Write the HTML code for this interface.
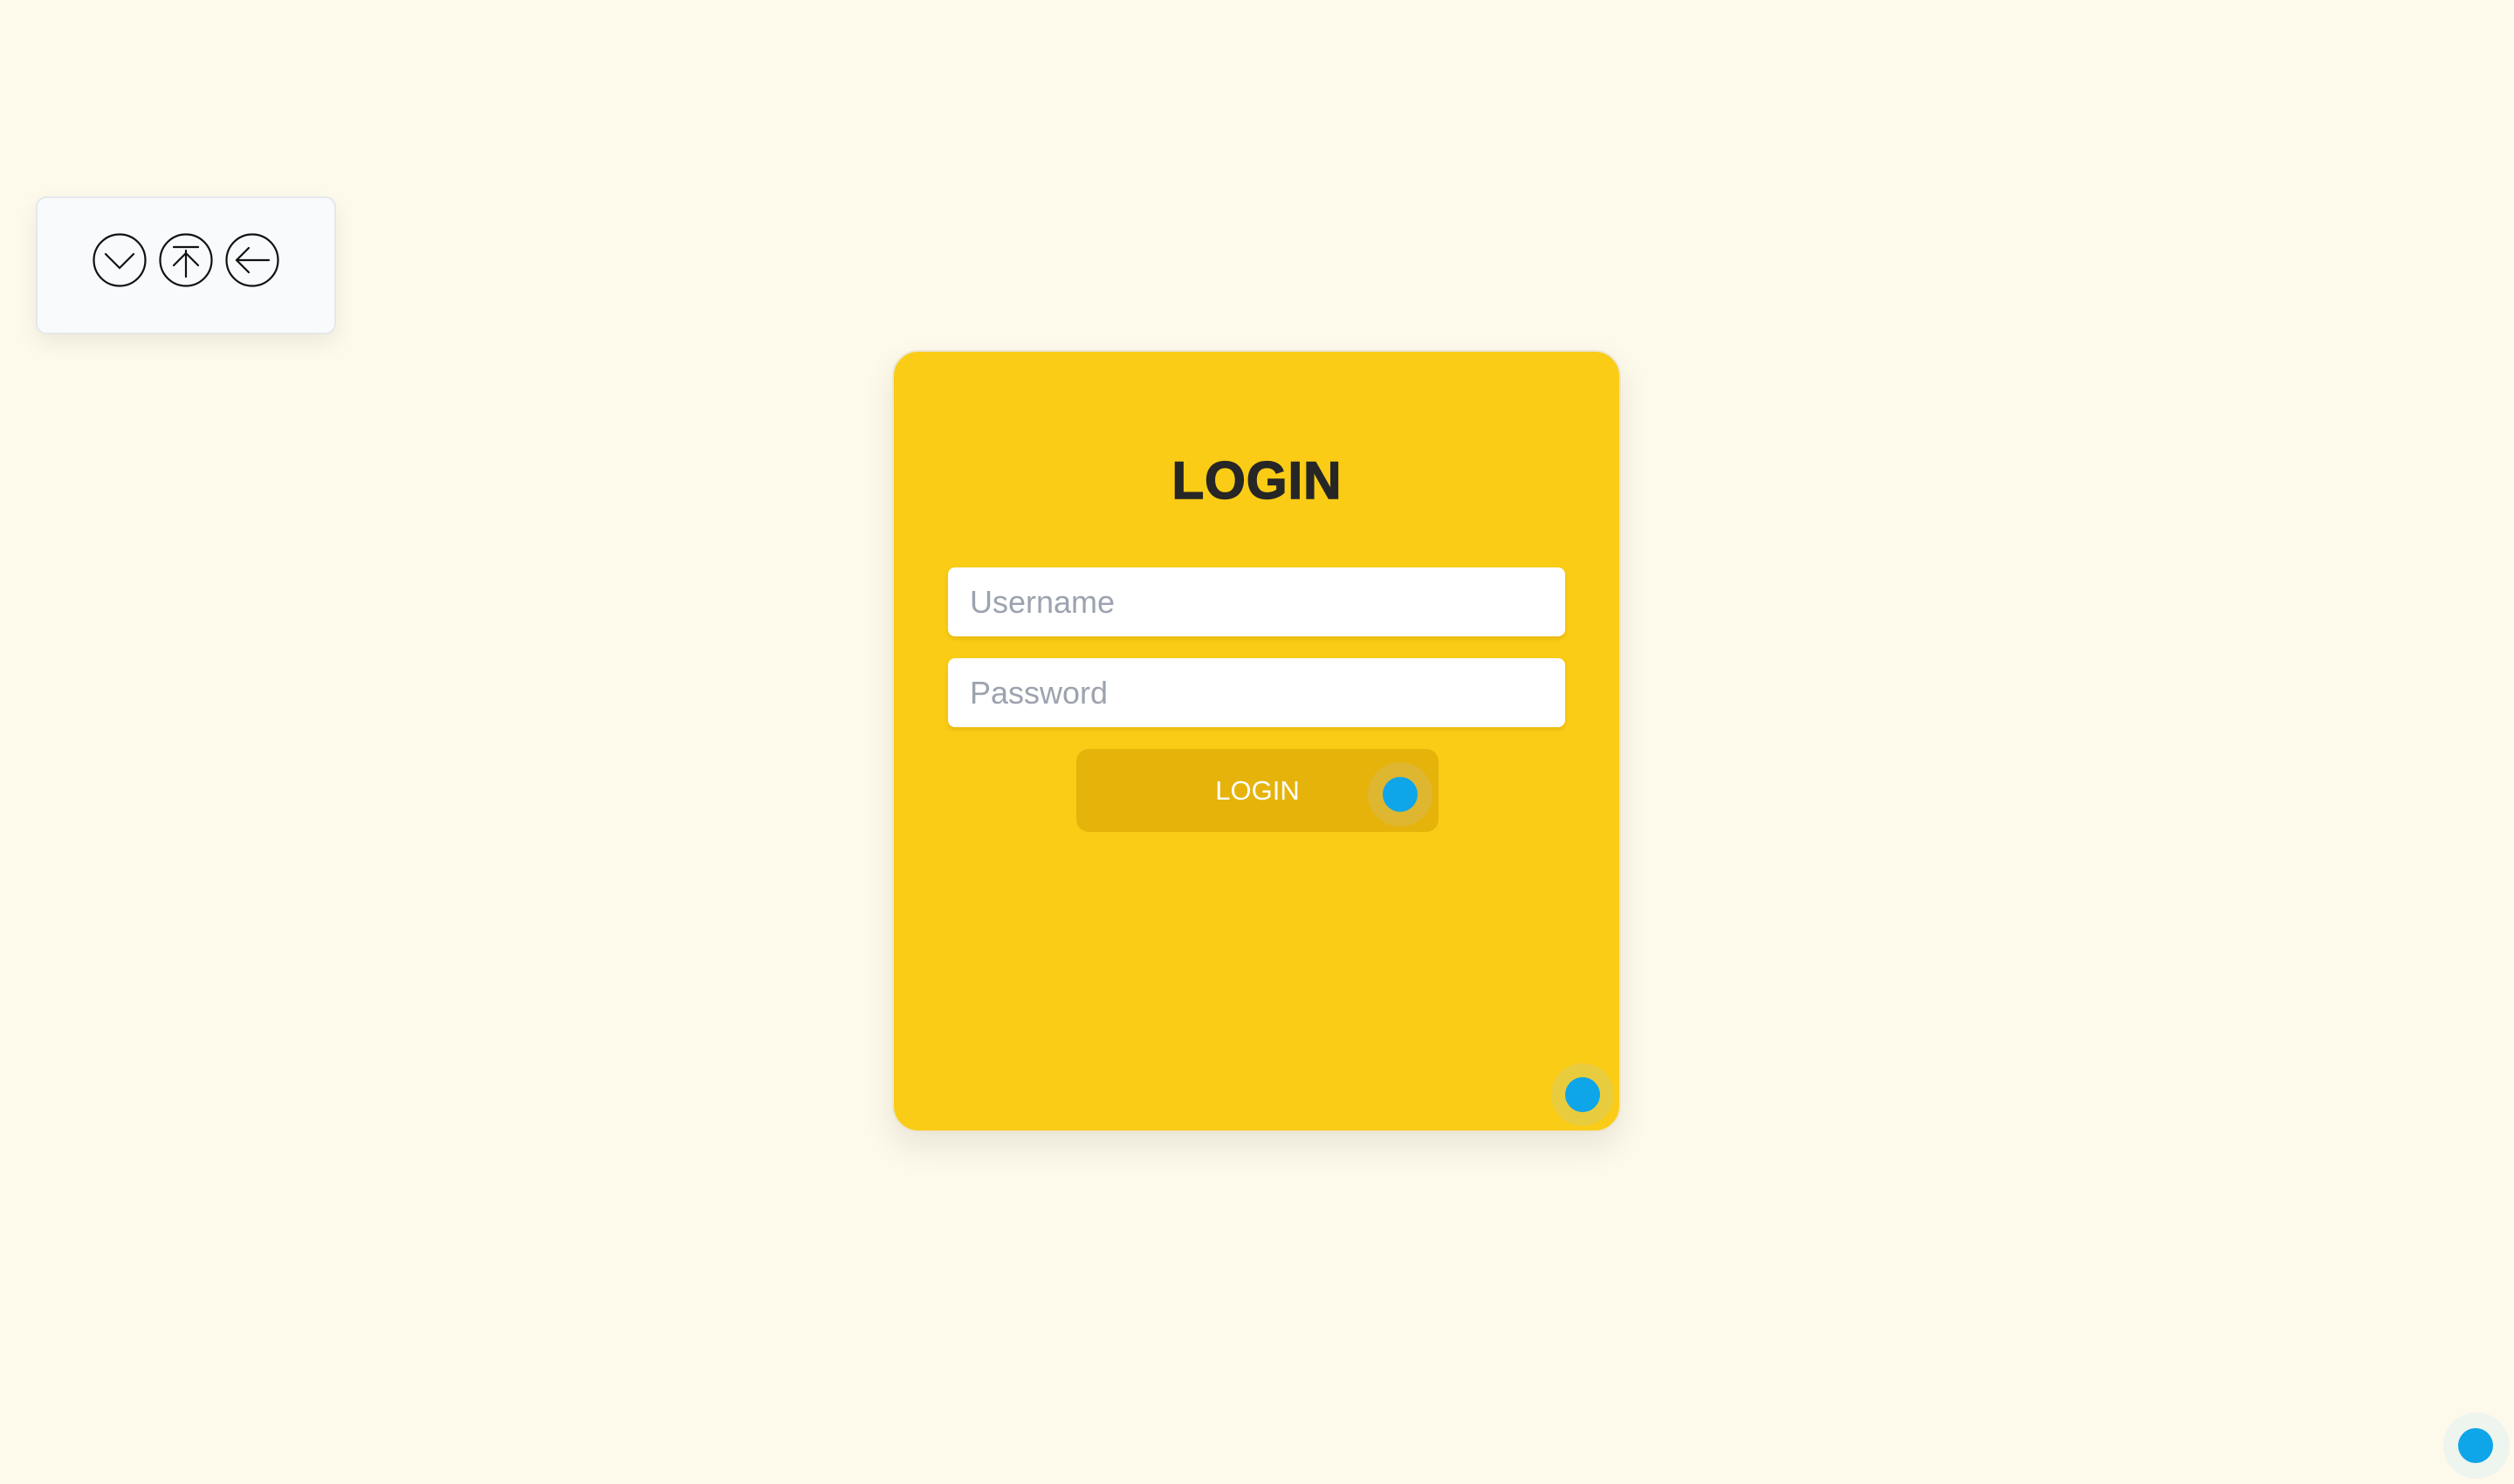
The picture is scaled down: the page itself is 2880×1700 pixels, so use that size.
<!DOCTYPE html>
<html><head><meta charset="utf-8"><style>
html,body{margin:0;padding:0;width:2880px;height:1700px;background:#fefaeb;overflow:hidden;font-family:"Liberation Sans",sans-serif;}
.panel{position:absolute;left:41px;top:225px;width:340px;height:154px;background:#f8fafc;border:2px solid #e5e7eb;border-radius:12px;box-shadow:0 10px 24px rgba(0,0,0,0.07);}
.card{position:absolute;left:1022px;top:401px;width:831px;height:892px;background:#facc15;border:2px solid #ece6d0;border-radius:30px;box-shadow:0 16px 36px rgba(0,0,0,0.09);}
h1{position:absolute;left:0;width:100%;top:513px;margin:0;text-align:center;font-size:60px;font-weight:900;color:#262626;line-height:76px;letter-spacing:1px;-webkit-text-stroke:1.5px #262626;}
.inp{position:absolute;left:1086px;width:707px;height:79px;background:#fff;border-radius:8px;box-shadow:0 3px 4px rgba(180,130,0,0.25);color:#9ca3af;font-size:36px;line-height:79px;text-indent:25px;}
.btn{position:absolute;left:1233px;top:858px;width:415px;height:95px;background:#e6b30a;border-radius:14px;color:#fff;font-size:31px;line-height:95px;text-align:center;}
.dot{position:absolute;width:40px;height:40px;border-radius:50%;background:#0ea5e9;}
.halo{position:absolute;border-radius:50%;}
</style></head><body>
<div class="panel"></div>
<svg style="position:absolute;left:0;top:0" width="420" height="420">
<g fill="none" stroke="#111" stroke-width="2.2" stroke-linecap="round">
<circle cx="137" cy="298" r="29.5"/>
<polyline points="121,291 137,307 153,291"/>
<circle cx="213" cy="298" r="29.5"/>
<line x1="199" y1="283" x2="227" y2="283"/>
<line x1="213" y1="287" x2="213" y2="317"/>
<polyline points="199,304 213,290 227,304"/>
<circle cx="289" cy="298" r="29.5"/>
<line x1="272" y1="298" x2="308" y2="298"/>
<polyline points="285,284 271,298 285,312"/>
</g></svg>
<div class="card"></div>
<h1>LOGIN</h1>
<div class="inp" style="top:650px">Username</div>
<div class="inp" style="top:754px">Password</div>
<div class="btn">LOGIN</div>
<div class="halo" style="left:1567px;top:873px;width:74px;height:74px;background:#dcb63a;opacity:0.8"></div>
<div class="dot" style="left:1584px;top:890px"></div>
<div class="halo" style="left:1777px;top:1218px;width:72px;height:72px;background:#e8cc3e"></div>
<div class="dot" style="left:1793px;top:1234px"></div>
<div class="halo" style="left:2799px;top:1618px;width:76px;height:76px;background:#eef4ee"></div>
<div class="dot" style="left:2816px;top:1636px"></div>
</body></html>
